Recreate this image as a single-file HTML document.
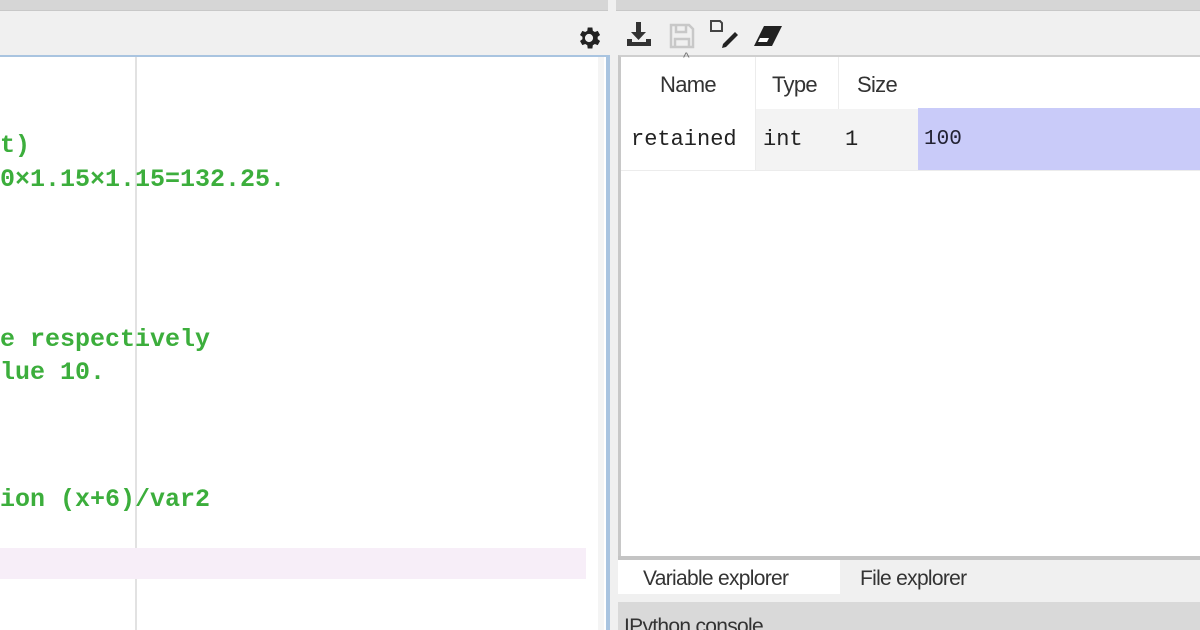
<!DOCTYPE html><html><head><meta charset="utf-8"><style>
*{margin:0;padding:0;box-sizing:border-box}
html,body{width:1200px;height:630px;overflow:hidden}
body{background:#f0f0f0;position:relative;font-family:"Liberation Sans",sans-serif}
.a{position:absolute}
.code{position:absolute;left:0;font-family:"Liberation Mono",monospace;font-size:25px;line-height:30px;color:#3cae3c;font-weight:bold;white-space:pre}
.h{font-size:22px;line-height:26px;color:#333;position:absolute;letter-spacing:-0.7px}
.m{font-family:"Liberation Mono",monospace;font-size:22px;line-height:26px;color:#222;position:absolute}
</style></head><body>
<div class="a" style="left:0;top:0;width:608px;height:11px;background:#d6d6d6;border-bottom:1px solid #c8c8c8"></div>
<div class="a" style="left:616px;top:0;width:584px;height:11px;background:#d6d6d6;border-bottom:1px solid #c8c8c8"></div>
<div class="a" style="left:0;top:55px;width:610px;height:575px;background:#fff;border-top:2px solid #a9c4e0;border-right:4px solid #a9c4e0"></div>
<div class="a" style="left:598px;top:57px;width:6px;height:573px;background:#f4f4f4"></div>
<div class="a" style="left:135px;top:57px;width:2px;height:573px;background:#e2e2e2"></div>
<div class="a" style="left:0;top:548px;width:586px;height:31px;background:#f7eef8"></div>
<div class="code" style="top:131px">t)</div>
<div class="code" style="top:165px">0×1.15×1.15=132.25.</div>
<div class="code" style="top:325px">e respectively</div>
<div class="code" style="top:358px">lue 10.</div>
<div class="code" style="top:485px">ion (x+6)/var2</div>
<svg class="a" style="left:575px;top:24px" width="28" height="28" viewBox="0 0 24 24"><path fill="#222" d="M19.4 13a7.5 7.5 0 000-2l2.1-1.6-2-3.5-2.5 1a7 7 0 00-1.7-1L14.9 3h-4l-.4 2.9a7 7 0 00-1.7 1l-2.5-1-2 3.5L6.4 11a7.5 7.5 0 000 2l-2.1 1.6 2 3.5 2.5-1a7 7 0 001.7 1l.4 2.9h4l.4-2.9a7 7 0 001.7-1l2.5 1 2-3.5zM12 15.5a3.5 3.5 0 110-7 3.5 3.5 0 010 7z"/></svg>
<svg class="a" style="left:624px;top:20px" width="30" height="28" viewBox="0 0 30 28"><path fill="#333" d="M12 2h5v10h5l-7.5 8L7 12h5z"/><path fill="#333" d="M3 19h5v3h14v-3h5v7H3z"/></svg>
<svg class="a" style="left:668px;top:22px" width="28" height="28" viewBox="0 0 28 28"><path fill="none" stroke="#c8c8c8" stroke-width="2.5" d="M3 3h18l4 4v18H3z M8 3v7h10V3 M7 25v-8h14v8"/></svg>
<svg class="a" style="left:708px;top:18px" width="34" height="32" viewBox="0 0 34 32"><path fill="none" stroke="#444" stroke-width="2" d="M3 3h9l2 2v8H3z"/><path fill="#222" d="M27 14l3 3-12 12-4 1 1-4z"/></svg>
<svg class="a" style="left:752px;top:24px" width="32" height="24" viewBox="0 0 32 24"><path fill="#222" d="M12 2h18l-10 20H2z"/><path fill="#fff" d="M6 18l2-4h9l-2 4z"/></svg>
<div class="a" style="left:618px;top:55px;width:582px;height:505px;background:#fff;border-left:3px solid #c8c8c8;border-top:2px solid #cfcfcf"></div>
<div class="a" style="left:683px;top:50px;font-size:14px;line-height:14px;color:#777">^</div>
<div class="a" style="left:755px;top:57px;width:1px;height:113px;background:#ececec"></div>
<div class="a" style="left:838px;top:57px;width:1px;height:113px;background:#ececec"></div>
<div class="h" style="left:660px;top:72px">Name</div>
<div class="h" style="left:772px;top:72px">Type</div>
<div class="h" style="left:857px;top:72px">Size</div>
<div class="a" style="left:756px;top:109px;width:162px;height:61px;background:#f3f3f3"></div>
<div class="a" style="left:918px;top:108px;width:282px;height:62px;background:#c9cbf9"></div>
<div class="a" style="left:621px;top:170px;width:579px;height:1px;background:#ececec"></div>
<div class="m" style="left:631px;top:127px">retained</div>
<div class="m" style="left:763px;top:127px">int</div>
<div class="m" style="left:845px;top:127px">1</div>
<div class="m" style="left:924px;top:127px;color:#223;font-size:21px">100</div>
<div class="a" style="left:618px;top:556px;width:582px;height:4px;background:#c4c4c4"></div>
<div class="a" style="left:618px;top:560px;width:222px;height:34px;background:#fff"></div>
<div class="h" style="left:643px;top:566px;font-size:21px">Variable explorer</div>
<div class="h" style="left:860px;top:566px;font-size:21px">File explorer</div>
<div class="a" style="left:618px;top:602px;width:582px;height:28px;background:#d9d9d9"></div>
<div class="h" style="left:624px;top:614px;font-size:21px">IPython console</div>
</body></html>
